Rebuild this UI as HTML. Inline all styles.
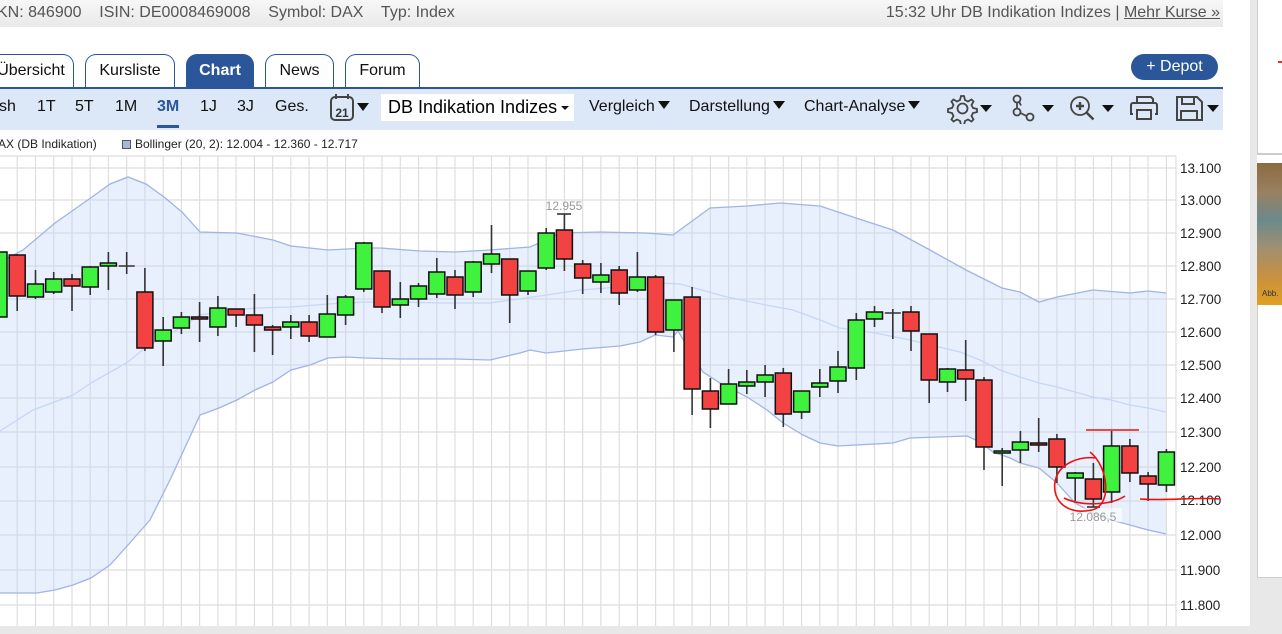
<!DOCTYPE html>
<html><head><meta charset="utf-8">
<style>
*{margin:0;padding:0;box-sizing:border-box}
body{width:1282px;height:634px;overflow:hidden;background:#fff;font-family:"Liberation Sans",Arial,sans-serif;position:relative}
.abs{position:absolute}
.topbar{left:0;top:0;width:1223px;height:27px;background:linear-gradient(#f7f7f7,#e9e9e9);color:#555;font-size:16px;line-height:25px;white-space:nowrap}
.tab{position:absolute;top:54px;height:33px;border:1.5px solid #2b579a;border-bottom:none;border-radius:11px 11px 0 0;background:#fff;font-size:16px;color:#111;text-align:center;line-height:32px}
.tab.on{background:#2b579a;color:#fff;font-weight:bold}
.bar{left:0;top:87px;width:1223px;height:43px;background:#dce7f7;border-top:2px solid #2b579a}
.tb{position:absolute;top:98px;font-size:16px;color:#111;white-space:nowrap}
.tri{display:inline-block;width:0;height:0;border-left:6px solid transparent;border-right:6px solid transparent;border-top:8px solid #111;vertical-align:2px;margin-left:3px}
</style></head><body>

<div class="abs topbar"><span class="abs" style="left:-3px">KN: 846900&nbsp;&nbsp;&nbsp; ISIN: DE0008469008&nbsp;&nbsp;&nbsp; Symbol: DAX&nbsp;&nbsp;&nbsp; Typ: Index</span>
<span class="abs" style="right:3px">15:32 Uhr DB Indikation Indizes | <span style="text-decoration:underline">Mehr Kurse »</span></span></div>

<div class="abs" style="left:1250px;top:0;width:7px;height:634px;background:#e8e8e8"></div>
<div class="abs" style="left:1257px;top:0;width:25px;height:155px;border-left:1px solid #ccc;border-bottom:2px solid #ccc;background:#fff"></div>
<div class="abs" style="left:1278px;top:61px;width:4px;height:2px;background:#d33"></div>
<div class="abs" style="left:1257px;top:163px;width:25px;height:142px;background:linear-gradient(#8a6a40 0%,#9a8060 20%,#6a8a8a 40%,#a09070 60%,#c89040 80%,#e0a020 100%)"></div>
<div class="abs" style="left:1262px;top:289px;font-size:8px;color:#333">Abb.</div>
<div class="abs" style="left:1257px;top:305px;width:25px;height:273px;border-left:1px solid #ccc;border-bottom:1px solid #ccc"></div>
<div class="abs" style="left:1257px;top:578px;width:25px;height:56px;background:#e8e8e8"></div>
<div class="abs" style="left:0;top:626px;width:1282px;height:8px;background:#e8e8e8"></div>

<div class="tab" style="left:-12px;width:86px">Übersicht</div>
<div class="tab" style="left:85px;width:90px">Kursliste</div>
<div class="tab on" style="left:186px;width:68px">Chart</div>
<div class="tab" style="left:265px;width:69px">News</div>
<div class="tab" style="left:345px;width:75px">Forum</div>
<div class="abs" style="left:1131px;top:54px;width:87px;height:26px;border-radius:13px;background:#2b579a;color:#fff;font-size:16px;text-align:center;line-height:26px">+ Depot</div>

<div class="abs bar"></div>
<div class="tb" style="left:-1px">sh</div>
<div class="tb" style="left:37px">1T</div>
<div class="tb" style="left:75px">5T</div>
<div class="tb" style="left:115px">1M</div>
<div class="tb" style="left:157px;color:#2b579a;font-weight:bold">3M</div>
<div class="abs" style="left:157px;top:125px;width:22px;height:3px;background:#2b579a"></div>
<div class="tb" style="left:200px">1J</div>
<div class="tb" style="left:237px">3J</div>
<div class="tb" style="left:275px">Ges.</div>
<svg class="abs" style="left:328px;top:93px" width="46" height="30">
<rect x="3" y="4" width="22" height="23" rx="4" fill="none" stroke="#444" stroke-width="2"/>
<line x1="8" y1="1" x2="8" y2="6" stroke="#444" stroke-width="2"/><line x1="20" y1="1" x2="20" y2="6" stroke="#444" stroke-width="2"/>
<text x="14" y="24" font-size="12" font-weight="bold" text-anchor="middle" font-family="Liberation Sans" fill="#333">21</text>
<polygon points="29,10 41,10 35,18" fill="#111"/></svg>
<div class="abs" style="left:381px;top:94px;width:193px;height:27px;background:#fff;font-size:18px;line-height:27px;padding-left:7px">DB Indikation Indizes <span style="position:absolute;right:5px;top:12px;border-left:4px solid transparent;border-right:4px solid transparent;border-top:4px solid #111"></span></div>
<div class="tb" style="left:589px">Vergleich<span class="tri"></span></div>
<div class="tb" style="left:689px">Darstellung<span class="tri"></span></div>
<div class="tb" style="left:804px">Chart-Analyse<span class="tri"></span></div>
<svg class="abs" style="left:945px;top:92px" width="280" height="32" fill="none" stroke="#444" stroke-width="1.8">
<path d="M16,4 l3,0 1,4 3,1.5 3.5,-2 2,2 -2,3.5 1.5,3 4,1 0,3 -4,1 -1.5,3 2,3.5 -2,2 -3.5,-2 -3,1.5 -1,4 -3,0 -1,-4 -3,-1.5 -3.5,2 -2,-2 2,-3.5 -1.5,-3 -4,-1 0,-3 4,-1 1.5,-3 -2,-3.5 2,-2 3.5,2 3,-1.5z"/>
<circle cx="17.5" cy="16.5" r="5"/>
<polygon points="35,13 47,13 41,20" fill="#111" stroke="none"/>
<circle cx="72" cy="7" r="3.5"/><circle cx="72" cy="20" r="3.5"/><circle cx="85" cy="25" r="3.5"/>
<path d="M72,10.5 v6 M75.5,21 l6,3 M74,9.5 l2,4"/>
<polygon points="97,13 109,13 103,20" fill="#111" stroke="none"/>
<circle cx="135" cy="14" r="9"/><path d="M141.5,20.5 l7,7 M131,14 h8 M135,10 v8" stroke-width="2.4"/>
<polygon points="157,13 169,13 163,20" fill="#111" stroke="none"/>
<path d="M192,11 v-6 h14 l2,2 v4 M188,22 h-2 v-9 a2,2 0 0 1 2,-2 h22 a2,2 0 0 1 2,2 v9 h-2 M192,18 h14 v9 h-14z" stroke-width="2"/>
<path d="M232,5 h20 l5,5 v18 h-25z M237,5 v7 h12 v-7 M236,28 v-9 h16 v9" stroke-width="2"/>
<polygon points="262,13 274,13 268,20" fill="#111" stroke="none"/>
</svg>

<div class="abs" style="left:-2px;top:137px;font-size:12px;color:#222;white-space:nowrap">AX (DB Indikation)</div>
<div class="abs" style="left:122px;top:140px;width:9px;height:9px;background:#a7b8dc;border:1px solid #555"></div>
<div class="abs" style="left:135px;top:137px;font-size:12px;color:#222;white-space:nowrap">Bollinger (20, 2): 12.004 - 12.360 - 12.717</div>

<svg class="abs" style="left:0;top:0" width="1282" height="634">
<g stroke="#dedede" stroke-width="1.2">
<line x1="0" y1="156" x2="1176" y2="156"/>
<line x1="0" y1="168" x2="1176" y2="168"/><line x1="0" y1="200" x2="1176" y2="200"/><line x1="0" y1="233" x2="1176" y2="233"/><line x1="0" y1="266" x2="1176" y2="266"/><line x1="0" y1="299" x2="1176" y2="299"/><line x1="0" y1="332" x2="1176" y2="332"/><line x1="0" y1="365" x2="1176" y2="365"/><line x1="0" y1="398" x2="1176" y2="398"/><line x1="0" y1="432" x2="1176" y2="432"/><line x1="0" y1="467" x2="1176" y2="467"/><line x1="0" y1="501" x2="1176" y2="501"/><line x1="0" y1="535" x2="1176" y2="535"/><line x1="0" y1="570" x2="1176" y2="570"/><line x1="0" y1="605" x2="1176" y2="605"/>
<line x1="17.2" y1="156" x2="17.2" y2="626"/><line x1="35.5" y1="156" x2="35.5" y2="626"/><line x1="53.7" y1="156" x2="53.7" y2="626"/><line x1="72" y1="156" x2="72" y2="626"/><line x1="90.2" y1="156" x2="90.2" y2="626"/><line x1="108.4" y1="156" x2="108.4" y2="626"/><line x1="126.7" y1="156" x2="126.7" y2="626"/><line x1="144.9" y1="156" x2="144.9" y2="626"/><line x1="163.2" y1="156" x2="163.2" y2="626"/><line x1="181.4" y1="156" x2="181.4" y2="626"/><line x1="199.6" y1="156" x2="199.6" y2="626"/><line x1="217.9" y1="156" x2="217.9" y2="626"/><line x1="236.1" y1="156" x2="236.1" y2="626"/><line x1="254.4" y1="156" x2="254.4" y2="626"/><line x1="272.6" y1="156" x2="272.6" y2="626"/><line x1="290.8" y1="156" x2="290.8" y2="626"/><line x1="309.1" y1="156" x2="309.1" y2="626"/><line x1="327.3" y1="156" x2="327.3" y2="626"/><line x1="345.6" y1="156" x2="345.6" y2="626"/><line x1="363.8" y1="156" x2="363.8" y2="626"/><line x1="382" y1="156" x2="382" y2="626"/><line x1="400.3" y1="156" x2="400.3" y2="626"/><line x1="418.5" y1="156" x2="418.5" y2="626"/><line x1="436.8" y1="156" x2="436.8" y2="626"/><line x1="455" y1="156" x2="455" y2="626"/><line x1="473.2" y1="156" x2="473.2" y2="626"/><line x1="491.5" y1="156" x2="491.5" y2="626"/><line x1="509.7" y1="156" x2="509.7" y2="626"/><line x1="528" y1="156" x2="528" y2="626"/><line x1="546.2" y1="156" x2="546.2" y2="626"/><line x1="564.4" y1="156" x2="564.4" y2="626"/><line x1="582.7" y1="156" x2="582.7" y2="626"/><line x1="600.9" y1="156" x2="600.9" y2="626"/><line x1="619.2" y1="156" x2="619.2" y2="626"/><line x1="637.4" y1="156" x2="637.4" y2="626"/><line x1="655.6" y1="156" x2="655.6" y2="626"/><line x1="673.9" y1="156" x2="673.9" y2="626"/><line x1="692.1" y1="156" x2="692.1" y2="626"/><line x1="710.4" y1="156" x2="710.4" y2="626"/><line x1="728.6" y1="156" x2="728.6" y2="626"/><line x1="746.8" y1="156" x2="746.8" y2="626"/><line x1="765.1" y1="156" x2="765.1" y2="626"/><line x1="783.3" y1="156" x2="783.3" y2="626"/><line x1="801.6" y1="156" x2="801.6" y2="626"/><line x1="819.8" y1="156" x2="819.8" y2="626"/><line x1="838" y1="156" x2="838" y2="626"/><line x1="856.3" y1="156" x2="856.3" y2="626"/><line x1="874.5" y1="156" x2="874.5" y2="626"/><line x1="892.8" y1="156" x2="892.8" y2="626"/><line x1="911" y1="156" x2="911" y2="626"/><line x1="929.2" y1="156" x2="929.2" y2="626"/><line x1="947.5" y1="156" x2="947.5" y2="626"/><line x1="965.7" y1="156" x2="965.7" y2="626"/><line x1="984" y1="156" x2="984" y2="626"/><line x1="1002.2" y1="156" x2="1002.2" y2="626"/><line x1="1020.4" y1="156" x2="1020.4" y2="626"/><line x1="1038.7" y1="156" x2="1038.7" y2="626"/><line x1="1056.9" y1="156" x2="1056.9" y2="626"/><line x1="1075.2" y1="156" x2="1075.2" y2="626"/><line x1="1093.4" y1="156" x2="1093.4" y2="626"/><line x1="1111.6" y1="156" x2="1111.6" y2="626"/><line x1="1129.9" y1="156" x2="1129.9" y2="626"/><line x1="1148.1" y1="156" x2="1148.1" y2="626"/><line x1="1166.4" y1="156" x2="1166.4" y2="626"/><line x1="1176" y1="156" x2="1176" y2="626"/>
</g>
<polygon fill="rgba(195,212,250,0.38)" points="0,262 23,250 55,223 92,197 110,184 128,177 146,184 164,197 182,212 200,232 237,233 273,240 291,246 328,250 347,249 364,248 380,248 420,251 455,252 490,250 530,247 546,240 560,233 600,232 645,233 673,235 710,208 747,206 780,203 820,206 856,218 893,230 930,250 966,270 1002,288 1020,292 1039,302 1057,297 1093,290 1130,293 1148,291 1166,293 1166,534 1148,530 1130,525 1111,520 1093,513 1075,503 1057,483 1039,468 1020,463 1010,458 993,452 980,442 967,436 910,438 893,443 838,446 820,443 803,435 783,423 767,410 747,397 720,383 703,372 678,331 673,337 655,335 640,342 620,346 583,349 546,353 530,350 520,353 490,360 455,359 400,359 364,358 347,357 328,358 310,365 291,370 273,382 255,390 237,400 219,408 200,415 170,480 150,520 128,545 110,565 91,578 73,585 55,590 37,593 0,593"/>
<polyline fill="none" stroke="#9fb5e2" stroke-width="1.3" points="0,262 23,250 55,223 92,197 110,184 128,177 146,184 164,197 182,212 200,232 237,233 273,240 291,246 328,250 347,249 364,248 380,248 420,251 455,252 490,250 530,247 546,240 560,233 600,232 645,233 673,235 710,208 747,206 780,203 820,206 856,218 893,230 930,250 966,270 1002,288 1020,292 1039,302 1057,297 1093,290 1130,293 1148,291 1166,293"/>
<polyline fill="none" stroke="#9fb5e2" stroke-width="1.3" points="1166,534 1148,530 1130,525 1111,520 1093,513 1075,503 1057,483 1039,468 1020,463 1010,458 993,452 980,442 967,436 910,438 893,443 838,446 820,443 803,435 783,423 767,410 747,397 720,383 703,372 678,331 673,337 655,335 640,342 620,346 583,349 546,353 530,350 520,353 490,360 455,359 400,359 364,358 347,357 328,358 310,365 291,370 273,382 255,390 237,400 219,408 200,415 170,480 150,520 128,545 110,565 91,578 73,585 55,590 37,593 0,593"/>
<polyline fill="none" stroke="#c5d7f6" stroke-width="1.3" points="0,431 33,410 73,395 91,383 128,362 146,347 182,327 200,315 219,312 255,308 291,307 328,304 364,302 400,302 440,303 490,303 540,296 580,290 620,287 660,283 680,284 727,297 766,305 793,310 820,320 840,328 875,333 910,340 960,352 980,360 1000,370 1020,377 1039,383 1057,387 1075,392 1093,397 1111,400 1130,405 1148,408 1166,412"/>

<g stroke="#333" stroke-width="1.6">
<line x1="-1" y1="252" x2="-1" y2="333"/><line x1="17.2" y1="254" x2="17.2" y2="311"/><line x1="35.5" y1="270" x2="35.5" y2="299"/><line x1="53.7" y1="272" x2="53.7" y2="294"/><line x1="72" y1="274" x2="72" y2="311"/><line x1="90.2" y1="266" x2="90.2" y2="295"/><line x1="108.4" y1="252" x2="108.4" y2="290"/><line x1="126.7" y1="252" x2="126.7" y2="274"/><line x1="144.9" y1="268" x2="144.9" y2="351"/><line x1="163.2" y1="317" x2="163.2" y2="366"/><line x1="181.4" y1="312" x2="181.4" y2="334"/><line x1="199.6" y1="302" x2="199.6" y2="342"/><line x1="217.9" y1="296" x2="217.9" y2="336"/><line x1="236.1" y1="309" x2="236.1" y2="327"/><line x1="254.4" y1="294" x2="254.4" y2="352"/><line x1="272.6" y1="325" x2="272.6" y2="355"/><line x1="290.8" y1="315" x2="290.8" y2="339"/><line x1="309.1" y1="315" x2="309.1" y2="342"/><line x1="327.3" y1="295" x2="327.3" y2="337"/><line x1="345.6" y1="295" x2="345.6" y2="325"/><line x1="363.8" y1="242" x2="363.8" y2="292"/><line x1="382" y1="271" x2="382" y2="313"/><line x1="400.3" y1="282" x2="400.3" y2="318"/><line x1="418.5" y1="283" x2="418.5" y2="307"/><line x1="436.8" y1="258" x2="436.8" y2="298"/><line x1="455" y1="270" x2="455" y2="309"/><line x1="473.2" y1="261" x2="473.2" y2="297"/><line x1="491.5" y1="225" x2="491.5" y2="273"/><line x1="509.7" y1="259" x2="509.7" y2="323"/><line x1="528" y1="271" x2="528" y2="295"/><line x1="546.2" y1="228" x2="546.2" y2="270"/><line x1="564.4" y1="214" x2="564.4" y2="271"/><line x1="557" y1="214" x2="571" y2="214"/><line x1="582.7" y1="260" x2="582.7" y2="294"/><line x1="600.9" y1="263" x2="600.9" y2="293"/><line x1="619.2" y1="266" x2="619.2" y2="305"/><line x1="637.4" y1="252" x2="637.4" y2="292"/><line x1="655.6" y1="275" x2="655.6" y2="335"/><line x1="673.9" y1="300" x2="673.9" y2="352"/><line x1="692.1" y1="287" x2="692.1" y2="415"/><line x1="710.4" y1="378" x2="710.4" y2="428"/><line x1="728.6" y1="369" x2="728.6" y2="404"/><line x1="746.8" y1="370" x2="746.8" y2="394"/><line x1="765.1" y1="365" x2="765.1" y2="397"/><line x1="783.3" y1="368" x2="783.3" y2="427"/><line x1="801.6" y1="391" x2="801.6" y2="419"/><line x1="819.8" y1="369" x2="819.8" y2="397"/><line x1="838" y1="351" x2="838" y2="393"/><line x1="856.3" y1="313" x2="856.3" y2="380"/><line x1="874.5" y1="306" x2="874.5" y2="327"/><line x1="892.8" y1="309" x2="892.8" y2="339"/><line x1="911" y1="306" x2="911" y2="351"/><line x1="929.2" y1="334" x2="929.2" y2="403"/><line x1="947.5" y1="368" x2="947.5" y2="392"/><line x1="965.7" y1="340" x2="965.7" y2="401"/><line x1="984" y1="377" x2="984" y2="470"/><line x1="1002.2" y1="448" x2="1002.2" y2="486"/><line x1="1020.4" y1="431" x2="1020.4" y2="463"/><line x1="1038.7" y1="418" x2="1038.7" y2="452"/><line x1="1056.9" y1="434" x2="1056.9" y2="483"/><line x1="1075.2" y1="472" x2="1075.2" y2="501"/><line x1="1093.4" y1="463" x2="1093.4" y2="507"/><line x1="1087" y1="507" x2="1100" y2="507"/><line x1="1111.6" y1="431" x2="1111.6" y2="503"/><line x1="1129.9" y1="439" x2="1129.9" y2="482"/><line x1="1148.1" y1="472" x2="1148.1" y2="501"/><line x1="1166.4" y1="449" x2="1166.4" y2="492"/>
<line x1="118.7" y1="266" x2="134.7" y2="266"/><line x1="884.8" y1="313" x2="900.8" y2="313"/>
</g>
<g stroke="#111" stroke-width="1.5">
<g fill="#3ef23e">
<rect x="-9" y="252" width="16" height="65"/><rect x="27.5" y="284" width="16" height="13"/><rect x="45.7" y="279" width="16" height="13"/><rect x="82.2" y="267" width="16" height="20"/><rect x="100.4" y="263" width="16" height="3"/><rect x="155.2" y="330" width="16" height="11"/><rect x="173.4" y="317" width="16" height="11"/><rect x="209.9" y="308" width="16" height="19"/><rect x="282.8" y="322" width="16" height="5"/><rect x="319.3" y="314" width="16" height="23"/><rect x="337.6" y="297" width="16" height="18"/><rect x="355.8" y="243" width="16" height="46"/><rect x="392.3" y="299" width="16" height="6"/><rect x="410.5" y="286" width="16" height="13"/><rect x="428.8" y="272" width="16" height="22"/><rect x="465.2" y="262" width="16" height="30"/><rect x="483.5" y="254" width="16" height="10"/><rect x="520" y="271" width="16" height="20"/><rect x="538.2" y="233" width="16" height="35"/><rect x="592.9" y="275" width="16" height="7"/><rect x="629.4" y="277" width="16" height="13"/><rect x="665.9" y="300" width="16" height="30"/><rect x="720.6" y="384" width="16" height="20"/><rect x="738.8" y="382" width="16" height="4"/><rect x="757.1" y="375" width="16" height="7"/><rect x="793.6" y="391" width="16" height="21"/><rect x="811.8" y="383" width="16" height="4"/><rect x="830" y="367" width="16" height="14"/><rect x="848.3" y="320" width="16" height="48"/><rect x="866.5" y="312" width="16" height="7"/><rect x="939.5" y="369" width="16" height="13"/><rect x="994.2" y="451" width="16" height="2"/><rect x="1012.4" y="442" width="16" height="8"/><rect x="1067.2" y="473" width="16" height="5"/><rect x="1103.6" y="446" width="16" height="46"/><rect x="1158.4" y="452" width="16" height="33"/>
</g>
<g fill="#f24242">
<rect x="9.2" y="255" width="16" height="41"/><rect x="64" y="279" width="16" height="7"/><rect x="136.9" y="292" width="16" height="56"/><rect x="191.6" y="317" width="16" height="2"/><rect x="228.1" y="309" width="16" height="6"/><rect x="246.4" y="315" width="16" height="10"/><rect x="264.6" y="327" width="16" height="3"/><rect x="301.1" y="322" width="16" height="14"/><rect x="374" y="271" width="16" height="36"/><rect x="447" y="277" width="16" height="18"/><rect x="501.7" y="259" width="16" height="36"/><rect x="556.4" y="230" width="16" height="29"/><rect x="574.7" y="264" width="16" height="14"/><rect x="611.2" y="270" width="16" height="23"/><rect x="647.6" y="277" width="16" height="55"/><rect x="684.1" y="297" width="16" height="92"/><rect x="702.4" y="391" width="16" height="18"/><rect x="775.3" y="373" width="16" height="41"/><rect x="903" y="312" width="16" height="19"/><rect x="921.2" y="334" width="16" height="46"/><rect x="957.7" y="370" width="16" height="9"/><rect x="976" y="380" width="16" height="67"/><rect x="1030.7" y="443" width="16" height="2"/><rect x="1048.9" y="439" width="16" height="28"/><rect x="1085.4" y="479" width="16" height="20"/><rect x="1121.9" y="446" width="16" height="27"/><rect x="1140.1" y="476" width="16" height="8"/>
</g></g>

<text x="564" y="210" font-size="12" fill="#999" text-anchor="middle" font-family="Liberation Sans">12.955</text>
<rect x="1066" y="508" width="56" height="14" fill="rgba(255,255,255,0.6)"/>
<text x="1093" y="521" font-size="12" fill="#999" text-anchor="middle" font-family="Liberation Sans">12.086,5</text>

<g font-size="13.5" fill="#222" font-family="Liberation Sans">
<text x="1180" y="173">13.100</text><text x="1180" y="205">13.000</text><text x="1180" y="238">12.900</text><text x="1180" y="271">12.800</text><text x="1180" y="304">12.700</text><text x="1180" y="337">12.600</text><text x="1180" y="370">12.500</text><text x="1180" y="403">12.400</text><text x="1180" y="437">12.300</text><text x="1180" y="472">12.200</text><text x="1180" y="505">12.100</text><text x="1180" y="540">12.000</text><text x="1180" y="575">11.900</text><text x="1180" y="610">11.800</text>
</g>

<g fill="none" stroke="#f01010" stroke-width="1.6">
<line x1="1086" y1="430" x2="1139" y2="430"/>
<path d="M1140,499 C1170,501 1195,497 1220,499"/>
<path d="M1090,452 C1108,466 1113,505 1092,510 C1068,515 1052,502 1055,482 C1058,463 1080,456 1096,458"/>
<path d="M1064,498 C1080,506 1110,506 1125,496"/>
</g>
</svg>
</body></html>
